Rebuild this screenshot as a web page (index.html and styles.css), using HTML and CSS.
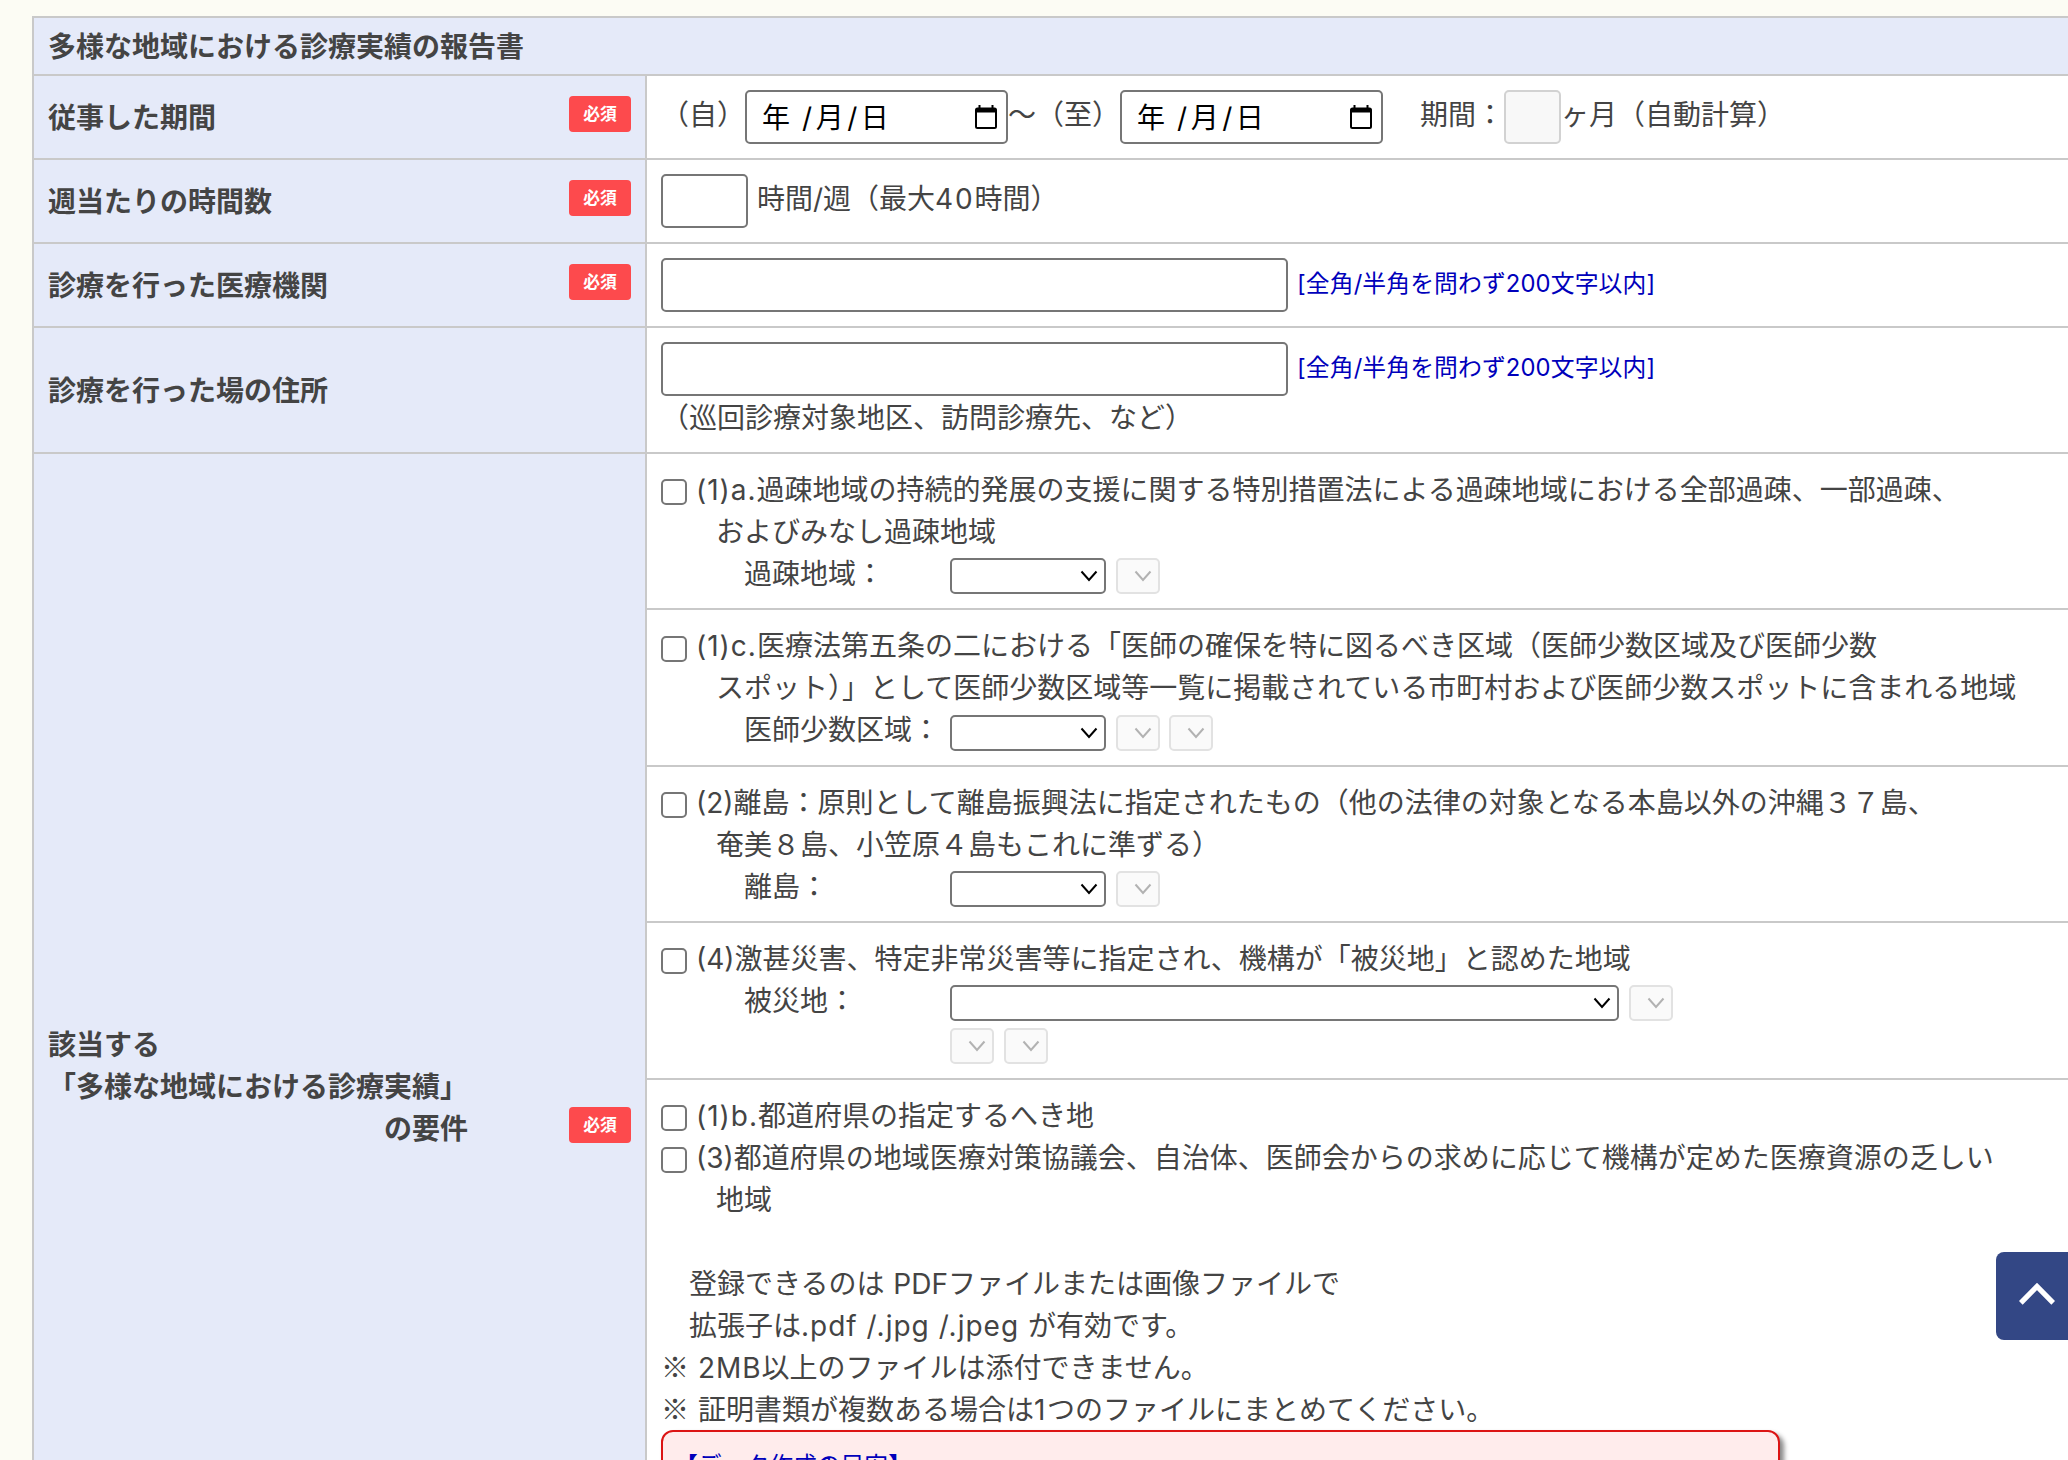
FILE: index.html
```html
<!DOCTYPE html>
<html lang="ja">
<head>
<meta charset="utf-8">
<title>多様な地域における診療実績の報告書</title>
<link rel="stylesheet" href="styles.css">
</head>
<body>
<svg class="defs" width="0" height="0">
  <symbol id="chev" viewBox="0 0 18 12"><path d="M1.5 1.500 9 10 16.5 1.500" fill="none" stroke="currentColor" stroke-width="2"/></symbol>
  <symbol id="cal" viewBox="0 0 22 24"><path d="M3.500 0h2v2.500h11V0h2v2.500h1a2.500 2.500 0 0 1 2.500 2.500v16.500a2.500 2.500 0 0 1-2.500 2.500h-17A2.500 2.500 0 0 1 0 21.500v-16.500A2.500 2.500 0 0 1 2.500 2.500h1zM2 7.500v14.500h18V7.500z" fill="#000" fill-rule="evenodd"/></symbol>
</svg>
<main class="table">
  <div class="title">多様な地域における診療実績の報告書</div>
  <div class="row">
    <div class="head"><span>従事した期間</span><span class="badge">必須</span></div>
    <div class="cell line">
      <span>（自）</span>
      <span class="box date"><span>年</span><i>/</i><span>月</span><i>/</i><span>日</span><svg><use href="#cal"/></svg></span>
      <span>～（至）</span>
      <span class="box date"><span>年</span><i>/</i><span>月</span><i>/</i><span>日</span><svg><use href="#cal"/></svg></span>
      <span class="term">期間：</span>
      <span class="box months"></span>
      <span>ヶ月（自動計算）</span>
    </div>
  </div>
  <div class="row">
    <div class="head"><span>週当たりの時間数</span><span class="badge">必須</span></div>
    <div class="cell line"><span class="box hours"></span><span class="unit">時間/週（最大<b class="digits">40</b>時間）</span></div>
  </div>
  <div class="row">
    <div class="head"><span>診療を行った医療機関</span><span class="badge">必須</span></div>
    <div class="cell line"><span class="box wide"></span><span class="hint">[全角/半角を問わず200文字以内]</span></div>
  </div>
  <div class="row tall">
    <div class="head"><span>診療を行った場の住所</span></div>
    <div class="cell">
      <div class="line"><span class="box wide"></span><span class="hint">[全角/半角を問わず200文字以内]</span></div>
      <div class="sub">（巡回診療対象地区、訪問診療先、など）</div>
    </div>
  </div>
  <div class="row last">
    <div class="head"><span>該当する<br>「多様な地域における診療実績」<br><span class="req">の要件</span></span><span class="badge">必須</span></div>
    <div class="groups">
      <section class="g1">
        <div class="opt"><span class="check"></span><span><b>(1)a.</b>過疎地域の持続的発展の支援に関する特別措置法による過疎地域における全部過疎、一部過疎、</span></div>
        <div class="cont">およびみなし過疎地域</div>
        <div class="pick"><span class="lab">過疎地域：</span><span class="sel"><svg><use href="#chev"/></svg></span><span class="sel off"><svg><use href="#chev"/></svg></span></div>
      </section>
      <section class="g2 low">
        <div class="opt"><span class="check"></span><span><b>(1)c.</b>医療法第五条の二における「医師の確保を特に図るべき区域（医師少数区域及び医師少数</span></div>
        <div class="cont">スポット）」として医師少数区域等一覧に掲載されている市町村および医師少数スポットに含まれる地域</div>
        <div class="pick"><span class="lab">医師少数区域：</span><span class="sel"><svg><use href="#chev"/></svg></span><span class="sel off"><svg><use href="#chev"/></svg></span><span class="sel off"><svg><use href="#chev"/></svg></span></div>
      </section>
      <section class="g1">
        <div class="opt"><span class="check"></span><span>(2)離島：原則として離島振興法に指定されたもの（他の法律の対象となる本島以外の沖縄３７島、</span></div>
        <div class="cont">奄美８島、小笠原４島もこれに準ずる）</div>
        <div class="pick"><span class="lab">離島：</span><span class="sel"><svg><use href="#chev"/></svg></span><span class="sel off"><svg><use href="#chev"/></svg></span></div>
      </section>
      <section class="g2">
        <div class="opt"><span class="check"></span><span>(4)激甚災害、特定非常災害等に指定され、機構が「被災地」と認めた地域</span></div>
        <div class="pick"><span class="lab">被災地：</span><span class="sel long"><svg><use href="#chev"/></svg></span><span class="sel off"><svg><use href="#chev"/></svg></span></div>
        <div class="pick"><span class="lab"></span><span class="sel off"><svg><use href="#chev"/></svg></span><span class="sel off"><svg><use href="#chev"/></svg></span></div>
      </section>
      <section class="files">
        <div class="opt"><span class="check"></span><span><b>(1)b.</b>都道府県の指定するへき地</span></div>
        <div class="opt"><span class="check"></span><span>(3)都道府県の地域医療対策協議会、自治体、医師会からの求めに応じて機構が定めた医療資源の乏しい</span></div>
        <div class="cont">地域</div>
        <div class="note">登録できるのは<b> </b>PDFファイルまたは画像ファイルで<br>拡張子は<b>.pdf /.jpg /.jpeg </b>が有効です。</div>
        <div><span class="mark">※</span><b> 2MB</b>以上のファイルは添付できません。<br><span class="mark">※</span><b> </b>証明書類が複数ある場合は<b class="digits">1</b>つのファイルにまとめてください。</div>
        <div class="guide">【データ作成の目安】</div>
      </section>
    </div>
  </div>
</main>
<a class="totop"><svg viewBox="0 0 36 24"><path d="M1.800 20.800 18 4.500 34.200 20.800" fill="none" stroke="#fff" stroke-width="5.200"/></svg></a>
</body>
</html>
```
FILE: styles.css
```css
* { box-sizing: border-box; }
html, body { height: 100%; }
body {
  margin: 0;
  overflow: hidden;
  background: #fcfcf4;
  color: #444;
  font: 28px/42px Inter, "Noto Sans CJK JP", sans-serif;
}
b { font-weight: inherit; letter-spacing: 1px; }
.digits { letter-spacing: 1.8px; }
i { font-style: normal; }
svg { display: block; }
.defs { position: absolute; }

.table {
  width: 2060px;
  margin: 16px 0 0 32px;
  border: 2px solid #c9c9c9;
  background: #fff;
  white-space: nowrap;
}
.title, .head { background: #e5eaf9; font-weight: 700; }
.title { height: 58px; padding: 8px 14px; border-bottom: 2px solid #c9c9c9; }
.row { display: flex; height: 84px; border-bottom: 2px solid #c9c9c9; }
.row.tall { height: 126px; }
.row.last { height: 1266px; }
.head {
  display: flex;
  align-items: center;
  justify-content: space-between;
  flex: none;
  width: 613px;
  padding: 2px 14px 0;
  border-right: 2px solid #c9c9c9;
}
.badge {
  width: 62px;
  height: 36px;
  margin-top: -8px;
  border-radius: 4px;
  background: #fd4a4d;
  color: #fff;
  font-size: 16.8px;
  line-height: 36px;
  text-align: center;
}
.last .badge { margin-top: 76px; }
.req { padding-left: 336px; }

.cell { padding: 14px; }
.line { display: flex; align-items: flex-start; line-height: 50px; }
.box {
  display: flex;
  align-items: center;
  flex: none;
  height: 54px;
  border: 2px solid #767676;
  border-radius: 5px;
  background: #fff;
}
.date { width: 263px; padding: 2px 9px 0 15px; color: #000; }
.date i { padding: 0 3.5px; }
.date i:first-of-type { padding-left: 12px; }
.date svg { width: 22px; height: 24px; margin: -2px 0 0 auto; }
.term { padding-left: 37px; }
.months { width: 57px; border-color: #d2d2d2; background: #f8f8f8; }
.hours { width: 87px; }
.unit { padding-left: 9px; }
.wide { width: 627px; }
.hint { padding: 1px 0 0 9px; color: #00b; font-size: 23.8px; letter-spacing: .12px; }
.sub { padding-top: 1px; line-height: 42px; }

.groups { flex: 1; }
section { padding: 15px 14px 0; border-bottom: 2px solid #c9c9c9; }
.g1 { height: 156px; }
.g2 { height: 157px; }
.opt { display: flex; height: 42px; }
.check {
  flex: none;
  width: 26px;
  height: 26px;
  margin: 10px 9px 0 0;
  border: 2px solid #767676;
  border-radius: 5px;
}
.cont { padding-left: 55px; }
.pick { display: flex; height: 43px; padding-left: 83px; }
.lab { width: 206px; }
.sel {
  display: flex;
  align-items: center;
  justify-content: flex-end;
  width: 156px;
  height: 36px;
  margin: 5px 9.500px 0 0;
  padding-right: 6px;
  border: 2px solid #767676;
  border-radius: 5px;
  color: #000;
}
.low .check { margin-top: 11px; }
.low .sel { margin-top: 6px; }
.sel svg { width: 18px; height: 12px; }
.sel.long { width: 669px; }
.sel.off { width: 44px; border-color: #e2e2e2; background: #fafafa; color: #b2b2b2; }
.files { border: 0; }
.note { padding: 42px 0 0 28px; }
.mark { font-family: "Noto Sans CJK JP", sans-serif; line-height: 1; }
.guide {
  width: 1119px;
  height: 160px;
  margin-top: -1px;
  padding: 13px 11px;
  border: 2px solid #dc1414;
  border-radius: 12px;
  background: #ffecec;
  box-shadow: 4px 4px 5px #888;
  color: #00b;
  font-size: 23.8px;
}
.totop {
  position: fixed;
  top: 1252px;
  right: 0;
  width: 72px;
  height: 88px;
  padding: 30px 0 0 23px;
  border-radius: 8px 0 0 8px;
  background: #334785;
}
.totop svg { width: 36px; height: 24px; }
```
